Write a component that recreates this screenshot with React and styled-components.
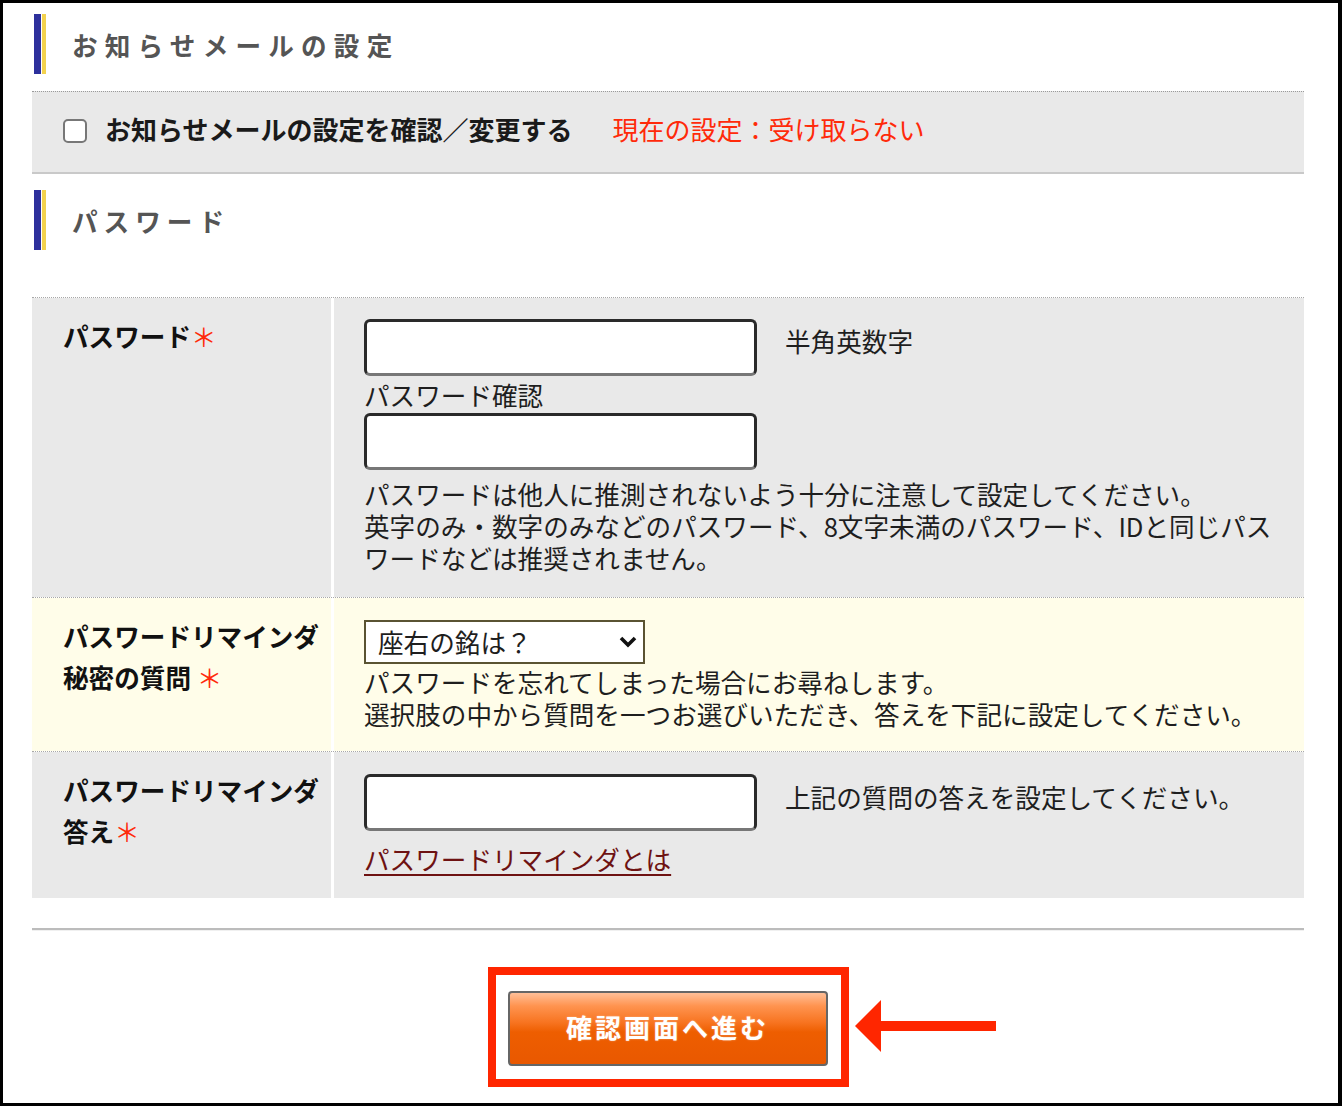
import styled, { createGlobalStyle } from 'styled-components'

const GlobalStyle = createGlobalStyle`
  html, body {
    margin: 0;
    padding: 0;
    background: #fff;
  }
  body {
    font-family: "Noto Sans CJK JP", "Noto Sans", sans-serif;
    color: #222;
  }
`

const Frame = styled.div`
  box-sizing: border-box;
  width: 1342px;
  height: 1106px;
  border: 3px solid #000;
  border-right-width: 4px;
  background: #fff;
  padding: 11px 34px 0 29px;
`

const SectionHeading = styled.h2`
  display: flex;
  align-items: center;
  height: 60px;
  margin: ${(p) => p.$top || 0}px 0 0 2px;
  font-size: 25.6px;
  font-weight: 700;
  letter-spacing: ${(p) => p.$spacing || 6}px;
  color: #555;
`

const HeadingText = styled.span`
  padding-bottom: 2px;
  margin-top: 3px;
`

const Bar = styled.span`
  flex: none;
  width: 12px;
  height: 60px;
  margin-right: 26px;
  background: linear-gradient(to right, #2d309c 0 7px, #fff 7px 8px, #f3d24e 8px 12px);
`

const MailRow = styled.div`
  display: flex;
  align-items: center;
  box-sizing: border-box;
  height: 83px;
  margin-top: 17px;
  padding: 0 0 8px 31px;
  background: #e9e9e9;
  border-top: 1px dotted #9a9a9a;
  border-bottom: 2px solid #c9c9c9;
  font-size: 26px;
`

const Check = styled.input`
  appearance: none;
  flex: none;
  box-sizing: border-box;
  width: 24px;
  height: 24px;
  margin: 5px 18px 0 0;
  border: 2px solid #777;
  border-radius: 5px;
  background: #fff;
`

const CheckLabel = styled.span`
  font-weight: 700;
  color: #1a1a1a;
`

const Current = styled.span`
  margin-left: 40px;
  color: #ff2a0a;
`

const Table = styled.div`
  margin-top: 47px;
  font-size: 25.6px;
`

const Row = styled.div`
  display: grid;
  grid-template-columns: 299px 1fr;
  column-gap: 3px;
  border-top: 1px dotted #a8a8a8;
  background: #fff;
`

const LabelCell = styled.div`
  padding: 17px 0 0 31px;
  background: ${(p) => p.$bg};
  font-weight: 700;
  line-height: 41px;
  color: #111;
`

const Req = styled.span`
  font-weight: 400;
  color: #ff2a0a;
`

const FieldCell = styled.div`
  padding: ${(p) => p.$pad};
  padding-left: 30px;
  padding-right: 12px;
  background: ${(p) => p.$bg};
  color: #1e1e1e;
`

const InputLine = styled.div`
  display: flex;
  align-items: flex-start;
  gap: 28px;
`

const SideText = styled.span`
  padding-top: ${(p) => p.$top}px;
  line-height: 32px;
`

const TextInput = styled.input`
  flex: none;
  box-sizing: border-box;
  width: 393px;
  height: 57px;
  margin: 0;
  border: 3px solid #2a2a2a;
  border-bottom-color: #777;
  border-radius: 6px;
  background: #fff;
`

const SubLabel = styled.div`
  line-height: 37px;
`

const Note = styled.p`
  margin: ${(p) => p.$top}px 0 0;
  line-height: 32px;
  white-space: nowrap;
`

const SelectWrap = styled.div`
  position: relative;
  box-sizing: border-box;
  width: 281px;
  height: 44px;
  border: 2px solid #5a5332;
  background: #fff;
`

const Select = styled.select`
  appearance: none;
  box-sizing: border-box;
  width: 100%;
  height: 100%;
  margin: 0;
  padding: 0 0 2px 12px;
  border: 0;
  background: transparent;
  font: inherit;
  color: #1e1e1e;
`

const Chevron = styled.svg`
  position: absolute;
  right: 5px;
  top: 12px;
  pointer-events: none;
`

const HelpLink = styled.a`
  display: inline-block;
  margin-top: 12px;
  line-height: 32px;
  color: #6e1212;
  text-decoration: underline;
  text-underline-offset: 4px;
`

const Rule = styled.hr`
  height: 2px;
  margin: 30px 0 0;
  border: 0;
  border-bottom: 1px solid #f0f0f0;
  background: #bcbcbc;
`

const Actions = styled.div`
  display: flex;
  justify-content: center;
  margin-top: 36px;
`

const Highlight = styled.div`
  position: relative;
  padding: 16px 13px 13px 12px;
  border: 8px solid #ff2600;
`

const SubmitButton = styled.button`
  display: block;
  width: 320px;
  height: 75px;
  margin: 0;
  padding: 0 0 4px;
  border: 2px solid #666;
  border-radius: 4px;
  background: linear-gradient(#ffbf98 0%, #ff9450 18%, #f7731f 42%, #ee5e00 55%, #e95800 100%);
  font-family: "Noto Sans CJK JP", sans-serif;
  font-size: 26px;
  font-weight: 700;
  letter-spacing: 3px;
  color: #fff;
  text-shadow: 0 0 2px rgba(255, 255, 255, 0.4);
`

const Arrow = styled.svg`
  position: absolute;
  left: calc(100% + 14px);
  top: 25px;
`

export default function App() {
  return (
    <Frame>
      <GlobalStyle />
      <SectionHeading $spacing={7.2}>
        <Bar />
        <HeadingText>お知らせメールの設定</HeadingText>
      </SectionHeading>
      <MailRow>
        <Check type="checkbox" />
        <CheckLabel>お知らせメールの設定を確認／変更する</CheckLabel>
        <Current>現在の設定：受け取らない</Current>
      </MailRow>

      <SectionHeading $top={16}>
        <Bar />
        <HeadingText>パスワード</HeadingText>
      </SectionHeading>

      <Table>
        <Row>
          <LabelCell $bg="#e9e9e9">
            パスワード<Req>＊</Req>
          </LabelCell>
          <FieldCell $bg="#e9e9e9" $pad="21px 0 23px">
            <InputLine>
              <TextInput type="password" />
              <SideText $top={6}>半角英数字</SideText>
            </InputLine>
            <SubLabel>パスワード確認</SubLabel>
            <TextInput type="password" />
            <Note $top={8}>
              パスワードは他人に推測されないよう十分に注意して設定してください。
              <br />
              英字のみ・数字のみなどのパスワード、8文字未満のパスワード、IDと同じパス
              <br />
              ワードなどは推奨されません。
            </Note>
          </FieldCell>
        </Row>

        <Row>
          <LabelCell $bg="#fffde9">
            パスワードリマインダ
            <br />
            秘密の質問 <Req>＊</Req>
          </LabelCell>
          <FieldCell $bg="#fffde9" $pad="22px 0 21px">
            <SelectWrap>
              <Select defaultValue="motto">
                <option value="motto">座右の銘は？</option>
              </Select>
              <Chevron width="20" height="16" viewBox="0 0 20 16">
                <polyline points="3,4 10,11 17,4" fill="none" stroke="#111" strokeWidth="3.6" />
              </Chevron>
            </SelectWrap>
            <Note $top={2}>
              パスワードを忘れてしまった場合にお尋ねします。
              <br />
              選択肢の中から質問を一つお選びいただき、答えを下記に設定してください。
            </Note>
          </FieldCell>
        </Row>

        <Row>
          <LabelCell $bg="#e9e9e9">
            パスワードリマインダ
            <br />
            答え<Req>＊</Req>
          </LabelCell>
          <FieldCell $bg="#e9e9e9" $pad="22px 0 21px">
            <InputLine>
              <TextInput type="text" />
              <SideText $top={7}>上記の質問の答えを設定してください。</SideText>
            </InputLine>
            <HelpLink href="#reminder">パスワードリマインダとは</HelpLink>
          </FieldCell>
        </Row>
      </Table>

      <Rule />

      <Actions>
        <Highlight>
          <SubmitButton type="button">確認画面へ進む</SubmitButton>
          <Arrow width="141" height="52" viewBox="0 0 141 52">
            <polygon points="0,26 26,0 26,52" fill="#ff2600" />
            <rect x="25" y="21" width="116" height="10" fill="#ff2600" />
          </Arrow>
        </Highlight>
      </Actions>
    </Frame>
  )
}
